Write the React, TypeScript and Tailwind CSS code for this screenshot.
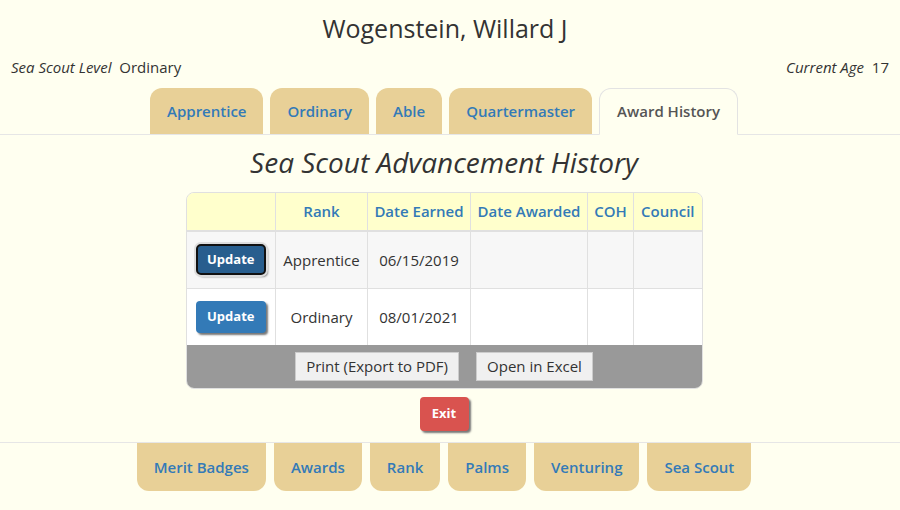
import React from 'react';

const topTabs = ['Apprentice', 'Ordinary', 'Able', 'Quartermaster'];
const bottomTabs = ['Merit Badges', 'Awards', 'Rank', 'Palms', 'Venturing', 'Sea Scout'];

const rows = [
  { rank: 'Apprentice', earned: '06/15/2019', active: true },
  { rank: 'Ordinary', earned: '08/01/2021', active: false },
];

const UpdateButton = ({ active }: { active: boolean }) => (
  <button
    className={
      active
        ? 'w-[70px] h-[31px] rounded-[5px] bg-[#285e8e] border-2 border-[#111] ring-2 ring-[#ddd] text-white text-[13px] font-bold shadow-[2px_2px_2px_#777]'
        : 'w-[70px] h-[32px] rounded-[4px] bg-[#337ab7] text-white text-[13px] font-bold shadow-[2px_2px_2px_#777]'
    }
  >
    Update
  </button>
);

export default function App() {
  return (
    <div
      className="min-h-[510px] bg-[#fffff0] text-[#333]"
      style={{ fontFamily: '"Open Sans", "Noto Sans", sans-serif' }}
    >
      <div className="pt-[11px] pr-[10px] text-center text-[25px] leading-[34px] text-[#333]">
        Wogenstein, Willard J
      </div>

      <div className="flex justify-between px-[11px] mt-[12px] text-[15px] leading-[20px]">
        <div>
          <span className="italic">Sea Scout Level</span>&nbsp; Ordinary
        </div>
        <div>
          <span className="italic">Current Age</span>&nbsp; 17
        </div>
      </div>

      <div className="mt-[11px] border-b border-[#e6e6e6]">
        <div className="flex justify-center gap-[7px] pr-[12px]">
          {topTabs.map((t) => (
            <div
              key={t}
              className="h-[46px] px-[17px] flex items-center rounded-t-[12px] bg-[#e8d097] text-[#337ab7] text-[15px] font-semibold"
            >
              {t}
            </div>
          ))}
          <div className="h-[47px] -mb-px px-[17px] flex items-center rounded-t-[12px] bg-[#fffff0] border border-[#e3e3e3] border-b-[#fffff0] text-[#555] text-[15px] font-semibold">
            Award History
          </div>
        </div>
      </div>

      <div className="pr-[12px] flex flex-col items-center">
        <div className="mt-[10px] text-[28px] leading-[34px] italic text-[#333]">
          Sea Scout Advancement History
        </div>

        <div className="mt-[13px] w-[517px] rounded-[8px] border border-[#e0e0e0] overflow-hidden">
          <table className="w-full border-collapse text-[15px]">
            <thead>
              <tr className="bg-[#ffffcc] text-[#337ab7] font-semibold h-[38px]">
                <th className="w-[89px] border-r border-[#e0e0e0] font-semibold"></th>
                <th className="w-[92px] border-r border-[#e0e0e0] font-semibold">Rank</th>
                <th className="w-[103px] border-r border-[#e0e0e0] font-semibold">Date Earned</th>
                <th className="w-[117px] border-r border-[#e0e0e0] font-semibold">Date Awarded</th>
                <th className="w-[46px] border-r border-[#e0e0e0] font-semibold">COH</th>
                <th className="font-semibold">Council</th>
              </tr>
            </thead>
            <tbody>
              {rows.map((r, i) => (
                <tr
                  key={r.rank}
                  className={
                    i === 0
                      ? 'h-[57px] bg-[#f7f7f7] border-t-2 border-[#e0e0e0] text-center'
                      : 'h-[57px] bg-white border-t border-[#e0e0e0] text-center'
                  }
                >
                  <td className="border-r border-[#e0e0e0]">
                    <UpdateButton active={r.active} />
                  </td>
                  <td className="border-r border-[#e0e0e0]">{r.rank}</td>
                  <td className="border-r border-[#e0e0e0]">{r.earned}</td>
                  <td className="border-r border-[#e0e0e0]"></td>
                  <td className="border-r border-[#e0e0e0]"></td>
                  <td></td>
                </tr>
              ))}
            </tbody>
          </table>
          <div className="h-[43px] bg-[#999] flex items-center justify-center gap-[17px]">
            <button className="h-[29px] px-[10px] bg-[#f0f0f0] border border-[#ccc] text-[15px] text-[#333]">
              Print (Export to PDF)
            </button>
            <button className="h-[29px] px-[10px] bg-[#f0f0f0] border border-[#ccc] text-[15px] text-[#333]">
              Open in Excel
            </button>
          </div>
        </div>

        <button className="mt-[8px] w-[49px] h-[34px] rounded-[4px] bg-[#d9534f] text-white text-[13px] font-bold shadow-[2px_2px_2px_#777]">
          Exit
        </button>
      </div>

      <div className="mt-[11px] border-t border-[#e6e6e6]">
        <div className="flex justify-center gap-[8px] pr-[12px]">
          {bottomTabs.map((t) => (
            <div
              key={t}
              className="h-[48px] px-[17px] flex items-center rounded-b-[12px] bg-[#e8d097] text-[#337ab7] text-[15px] font-semibold"
            >
              {t}
            </div>
          ))}
        </div>
      </div>
    </div>
  );
}
